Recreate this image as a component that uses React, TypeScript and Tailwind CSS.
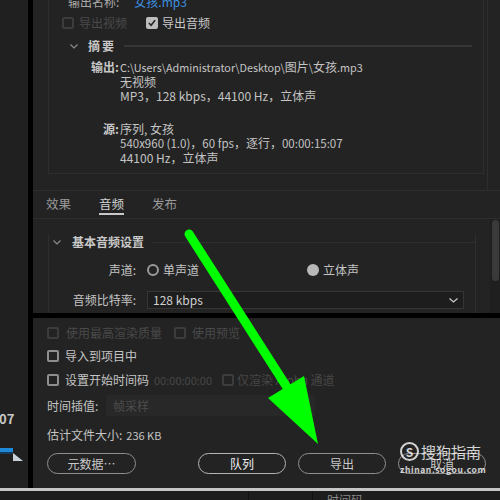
import React from 'react';

const Chevron = () => (
  <svg width="8" height="5" viewBox="0 0 8 5" className="shrink-0">
    <polyline points="0.5,0.5 4,4 7.5,0.5" fill="none" stroke="#8a8a8a" strokeWidth="1.2" />
  </svg>
);

const Box = ({ checked = false, dim = false }: { checked?: boolean; dim?: boolean }) => (
  <span
    className={`flex h-[12px] w-[12px] shrink-0 items-center justify-center rounded-[2px] border-2 ${
      checked ? 'border-[#bdbdbd] bg-[#bdbdbd]' : dim ? 'border-[#3c3c3c]' : 'border-[#8e8e8e]'
    }`}
  >
    {checked && (
      <svg width="9" height="8" viewBox="0 0 9 8">
        <polyline points="1,4 3.5,6.5 8,1" fill="none" stroke="#262626" strokeWidth="1.8" />
      </svg>
    )}
  </span>
);

const Pill = ({ children, bright = false }: { children: React.ReactNode; bright?: boolean }) => (
  <div
    className={`flex h-[21px] w-[88px] items-center justify-center rounded-full border ${
      bright ? 'border-[#b4b4b4] text-[#f2f2f2]' : 'border-[#8e8e8e] text-[#c8c8c8]'
    }`}
  >
    {children}
  </div>
);

export default function App() {
  return (
    <div className="relative h-[500px] w-[500px] overflow-hidden bg-[#232323] font-['Noto_Sans_CJK_SC',sans-serif] text-[12px] leading-[16px] text-[#c4c4c4]">
      <div className="flex h-[488px]">
        {/* left timeline strip */}
        <div className="w-[28px] overflow-hidden bg-[#202020] pt-[411px]">
          <div className="-ml-[1px] h-[16px] text-[13px] font-bold text-[#c8c8c8]">07</div>
          <div className="mt-[21px] flex">
            <div className="w-[13px]">
              <div className="h-[4px] bg-[#1f8ad8]" />
              <div className="h-[2px] bg-[#173b5a]" />
            </div>
            <svg width="10" height="8" viewBox="0 0 10 8" className="mt-[5px]">
              <polygon points="0,0 10,8 0,8" fill="#c9d2da" />
            </svg>
          </div>
        </div>
        <div className="w-[5px] bg-black" />

        <div className="flex w-[467px] flex-col">
          {/* summary area */}
          <div className="flex h-[190px] pl-[15px]">
            <div className="h-[174px] w-[436px] overflow-hidden border-x border-b border-[#2e2e2e]">
              <div className="-mt-[6px] flex h-[16px] items-center pl-[19px]">
                <span className="text-[#a8a8a8]">输出名称:</span>
                <span className="ml-[15px] text-[#3d8fe0]">女孩.mp3</span>
              </div>
              <div className="mt-[5px] flex h-[16px] items-center pl-[13px]">
                <Box dim />
                <span className="ml-[5px] w-[67px] text-[#4a4a4a]">导出视频</span>
                <Box checked />
                <span className="ml-[4px] text-[#c8c8c8]">导出音频</span>
              </div>
              <div className="mt-[7px] flex h-[16px] items-center pl-[21px]">
                <Chevron />
                <span className="ml-[10px] font-bold tracking-[2px] text-[#c8c8c8]">摘要</span>
                <div className="mr-[11px] ml-[8px] h-[2px] flex-1 bg-[#363636]" />
              </div>
              <div className="mt-[6px] grid grid-cols-[70px_1fr] leading-[14.5px]">
                <div className="text-right font-bold text-[#c8c8c8]">输出:</div>
                <div className="pl-[1px]">
                  <span className="text-[10.8px]">{'C:\\Users\\Administrator\\Desktop\\'}</span>
                  图片
                  <span className="text-[10.8px]">{'\\'}</span>
                  女孩
                  <span className="text-[10.8px]">.mp3</span>
                </div>
                <div />
                <div className="pl-[1px]">无视频</div>
                <div />
                <div className="pl-[1px]">MP3，128 kbps，44100 Hz，立体声</div>
              </div>
              <div className="mt-[18px] grid grid-cols-[70px_1fr] leading-[14.5px]">
                <div className="text-right font-bold text-[#c8c8c8]">源:</div>
                <div className="pl-[1px]">序列, 女孩</div>
                <div />
                <div className="pl-[1px]">
                  <span className="text-[11.5px]">540x960 (1.0)</span>，<span className="text-[11.5px]">60 fps</span>，逐行，
                  <span className="text-[11.5px]">00:00:15:07</span>
                </div>
                <div />
                <div className="pl-[1px]">44100 Hz，立体声</div>
              </div>
            </div>
            <div className="ml-[3px] h-full w-px bg-[#2e2e2e]" />
          </div>

          {/* tabs */}
          <div className="flex h-[29px] gap-[28px] border-y border-[#2e2e2e] pl-[13px] text-[12.5px]">
            <div className="pt-[5px] text-[#9a9a9a]">效果</div>
            <div className="flex flex-col pt-[5px] text-[#d2d2d2]">
              <span>音频</span>
              <div className="mt-[1px] h-[2px] bg-[#c8c8c8]" />
            </div>
            <div className="pt-[5px] text-[#9a9a9a]">发布</div>
          </div>

          {/* audio settings */}
          <div className="flex h-[94px] overflow-hidden">
            <div className="flex-1">
              <div className="mt-[15px] ml-[15px] h-[100px] w-[428px] border-x border-[#2e2e2e]">
                <div className="flex h-[16px] items-center pl-[4px]">
                  <Chevron />
                  <span className="ml-[11px] font-bold text-[#c8c8c8]">基本音频设置</span>
                  <div className="ml-[8px] h-px flex-1 bg-[#2e2e2e]" />
                </div>
                <div className="mt-[11px] flex h-[18px] items-center">
                  <span className="w-[87px] text-right">声道:</span>
                  <div className="ml-[11px] flex w-[160px] items-center">
                    <span className="h-[12px] w-[12px] rounded-full border-2 border-[#9a9a9a]" />
                    <span className="ml-[4px]">单声道</span>
                  </div>
                  <div className="flex items-center">
                    <span className="h-[12px] w-[12px] rounded-full bg-[#b8b8b8]" />
                    <span className="ml-[4px]">立体声</span>
                  </div>
                </div>
                <div className="mt-[12px] flex h-[18px] items-center">
                  <span className="w-[87px] text-right">音频比特率:</span>
                  <div className="ml-[11px] flex h-[18px] w-[317px] items-center justify-between border border-[#363636] bg-[#1d1d1d] px-[5px] text-[#d0d0d0]">
                    <span>128 kbps</span>
                    <svg width="9" height="5" viewBox="0 0 9 5">
                      <polyline points="0.5,0.5 4.5,4 8.5,0.5" fill="none" stroke="#c8c8c8" strokeWidth="1.3" />
                    </svg>
                  </div>
                </div>
              </div>
            </div>
            <div className="flex w-[10px] justify-center bg-[#1f1f1f] pt-[1px]">
              <div className="h-[61px] w-[7px] rounded-[4px] bg-[#3a3a3a]" />
            </div>
          </div>

          <div className="h-[5px] bg-black" />

          {/* export options */}
          <div className="flex h-[170px] flex-col px-[14px] pt-[7px]">
            <div className="flex h-[16px] items-center text-[#4a4a4a]">
              <Box dim />
              <span className="ml-[7px] w-[108px]">使用最高渲染质量</span>
              <Box dim />
              <span className="ml-[6px]">使用预览</span>
            </div>
            <div className="mt-[7px] flex h-[16px] items-center">
              <Box />
              <span className="ml-[6px]">导入到项目中</span>
            </div>
            <div className="mt-[8px] flex h-[16px] items-center">
              <Box />
              <span className="ml-[6px]">设置开始时间码</span>
              <span className="ml-[5px] text-[11px] text-[#474747]">00:00:00:00</span>
              <span className="ml-[10px]">
                <Box dim />
              </span>
              <span className="ml-[3px] text-[#474747]">仅渲染 Alpha 通道</span>
            </div>
            <div className="mt-[7px] flex h-[21px] items-center">
              <span className="w-[59px]">时间插值:</span>
              <div className="flex h-[21px] w-[209px] items-center bg-[#282828] pl-[7px] text-[#4d4d4d]">帧采样</div>
            </div>
            <div className="mt-[11px] flex h-[16px] items-center">
              <span>估计文件大小:</span>
              <span className="ml-[4px] text-[11px]">236 KB</span>
            </div>
            <div className="mt-[10px] flex h-[21px] justify-between">
              <div className="flex h-[21px] w-[89px] items-center justify-center rounded-full border border-[#8e8e8e] text-[#c8c8c8]">
                元数据…
              </div>
              <div className="flex gap-[12px]">
                <Pill bright>队列</Pill>
                <Pill>导出</Pill>
                <Pill>取消</Pill>
              </div>
            </div>
          </div>
        </div>
      </div>

      <div className="h-[3px] bg-[#c6c6c6]" />
      <div className="flex h-[9px] overflow-hidden bg-[#1d1d1d]">
        <div className="w-[248px]" />
        <div className="w-px bg-[#111111]" />
        <div className="w-[63px]" />
        <div className="w-px bg-[#111111]" />
        <div className="pl-[14px] pt-[1px] text-[#8a8a8a]">时间码</div>
      </div>

      {/* annotation arrow */}
      <svg className="pointer-events-none absolute top-0 left-0" width="500" height="500" viewBox="0 0 500 500">
        <line x1="189" y1="234" x2="290" y2="392" stroke="#00ff00" strokeWidth="9" strokeLinecap="round" />
        <polygon points="268,398 304,376 318,444" fill="#00ff00" />
      </svg>

      {/* watermark */}
      <div className="pointer-events-none absolute top-[442px] left-[400px] flex flex-col text-white/80">
        <div className="flex items-center">
          <span className="flex h-[19px] w-[19px] items-center justify-center rounded-full border-2 border-white/80 text-[12px] leading-none font-bold">
            S
          </span>
          <span className="ml-[2px] text-[15px] leading-[19px]">搜狗指南</span>
        </div>
        <span className="mt-[4px] text-[8.5px] leading-[9px] font-bold tracking-[0.6px]">zhinan.sogou.com</span>
      </div>
    </div>
  );
}
